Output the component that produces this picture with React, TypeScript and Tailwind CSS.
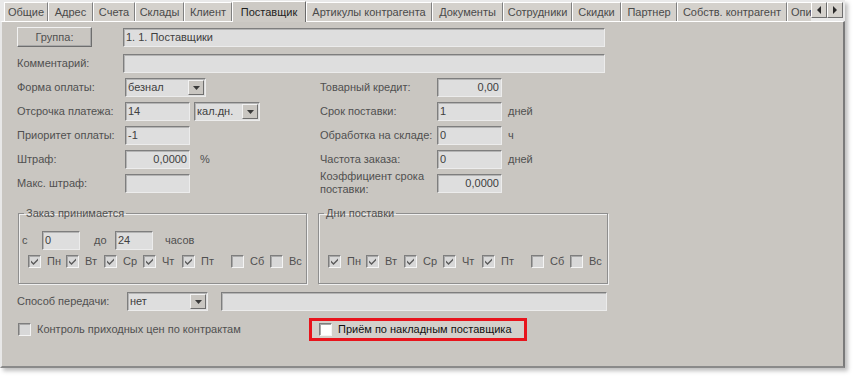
import React from "react";

const font = "font-['Liberation_Sans',Arial,sans-serif] text-[11px] leading-[13px]";

const tabs = [
  { label: "Общие", w: "w-[44px]" },
  { label: "Адрес", w: "w-[45px]" },
  { label: "Счета", w: "w-[42px]" },
  { label: "Склады", w: "w-[49px]" },
  { label: "Клиент", w: "w-[48px]" },
  { label: "Поставщик", w: "w-[74px]", active: true },
  { label: "Артикулы контрагента", w: "w-[126px]" },
  { label: "Документы", w: "w-[71px]" },
  { label: "Сотрудники", w: "w-[69px]" },
  { label: "Скидки", w: "w-[49px]" },
  { label: "Партнер", w: "w-[56px]" },
  { label: "Собств. контрагент", w: "w-[110px]" },
];

function Input({ w, value, right }: { w: string; value?: string; right?: boolean }) {
  return (
    <div
      className={`${w} h-[19px] shrink-0 bg-[#dedede] border border-t-[#7e7e7e] border-l-[#7e7e7e] border-b-[#ececec] border-r-[#ececec] shadow-[inset_1px_1px_0_#b4b4b4] px-[2px] flex items-center overflow-hidden whitespace-nowrap text-[#404040] ${right ? "justify-end" : ""}`}
    >
      {value}
    </div>
  );
}

function Combo({ w, value }: { w: string; value: string }) {
  return (
    <div
      className={`${w} h-[19px] shrink-0 bg-[#dedede] border border-t-[#7e7e7e] border-l-[#7e7e7e] border-b-[#ececec] border-r-[#ececec] shadow-[inset_1px_1px_0_#b4b4b4] pl-[2px] pr-[1px] flex items-center justify-between text-[#404040]`}
    >
      <span>{value}</span>
      <div className="w-[16px] h-[15px] bg-[#c9c6c1] border border-t-[#f2f2f2] border-l-[#f2f2f2] border-b-[#6e6e6e] border-r-[#6e6e6e] flex items-center justify-center">
        <svg width="7" height="4" viewBox="0 0 7 4">
          <path d="M0 0h7L3.5 4z" fill="#3a3a3a" />
        </svg>
      </div>
    </div>
  );
}

function Check({ checked, white }: { checked?: boolean; white?: boolean }) {
  return (
    <div
      className={`w-[13px] h-[13px] shrink-0 border border-t-[#7e7e7e] border-l-[#7e7e7e] border-b-[#f4f4f4] border-r-[#f4f4f4] shadow-[inset_1px_1px_0_#a8a8a8] flex items-center justify-center ${white ? "bg-white" : "bg-[#d8d8d8]"}`}
    >
      {checked && (
        <svg width="7" height="7" viewBox="0 0 7 7">
          <path d="M0 2.5l2.5 2.5L7 0.5v2L2.5 7 0 4.5z" fill="#5c5c5c" />
        </svg>
      )}
    </div>
  );
}

function Days({ checks }: { checks: boolean[] }) {
  const days = ["Пн", "Вт", "Ср", "Чт", "Пт", "Сб", "Вс"];
  const widths = ["w-[38px]", "w-[38px]", "w-[39px]", "w-[39px]", "w-[49px]", "w-[39px]", "w-[30px]"];
  return (
    <div className="flex h-[13px] items-center">
      {days.map((d, i) => (
        <div key={d} className={`${widths[i]} flex items-center gap-[6px]`}>
          <Check checked={checks[i]} />
          <span>{d}</span>
        </div>
      ))}
    </div>
  );
}

function Row({ label, lw, children }: { label: React.ReactNode; lw: string; children: React.ReactNode }) {
  return (
    <div className="flex items-center h-[19px]">
      <div className={`${lw} shrink-0`}>{label}</div>
      {children}
    </div>
  );
}

export default function App() {
  const week = [true, true, true, true, true, false, false];
  return (
    <div className={`w-[853px] h-[378px] bg-white overflow-hidden ${font} text-[#505050]`}>
      <div className="w-[845px] h-[368px] flex flex-col shadow-[3px_3px_4px_rgba(0,0,0,0.25)]">
        {/* tabs */}
        <div className="h-[21px] flex items-end pl-[4px] bg-[#e9e9e9] relative">
          {tabs.map((t) =>
            t.active ? (
              <div
                key={t.label}
                className={`${t.w} h-[21px] -mb-[1px] bg-[#cdcac5] border-t border-l border-t-white border-l-white border-r border-r-[#6a6a6a] flex items-center justify-center text-[#1e1e1e] z-10 whitespace-nowrap`}
              >
                {t.label}
              </div>
            ) : (
              <div
                key={t.label}
                className={`${t.w} h-[19px] bg-[#d4d1cc] border-t border-t-white border-l border-l-white border-r border-r-[#808080] flex items-center justify-center whitespace-nowrap overflow-hidden text-[#4a4a4a]`}
              >
                {t.label}
              </div>
            )
          )}
          <div className="w-[24px] h-[19px] bg-[#d4d1cc] border-t border-t-white border-l border-l-white whitespace-nowrap pl-[3px] flex items-center text-[#4a4a4a]">
            Опи
          </div>
          <div className="flex h-[19px] items-start">
            {["M5 0v8L1 4z", "M1 0v8l4-4z"].map((d, i) => (
              <div
                key={i}
                className="w-[16px] h-[16px] bg-[#d4d1cc] border border-t-white border-l-white border-b-[#6e6e6e] border-r-[#6e6e6e] flex items-center justify-center"
              >
                <svg width="6" height="8" viewBox="0 0 6 8">
                  <path d={d} fill="#2a2a2a" />
                </svg>
              </div>
            ))}
          </div>
        </div>

        {/* body */}
        <div className="flex-1 bg-[#c9c6c1] border-t border-t-white border-l-2 border-l-[#e8e8e8] border-r-2 border-r-[#7a7a7a] border-b-2 border-b-[#8a8a8a] pl-[15px] pt-[5px] flex flex-col">
          <div className="flex items-center h-[20px]">
            <div className="w-[75px] h-[20px] bg-[#c9c6c1] border border-t-[#f2f2f2] border-l-[#f2f2f2] border-b-[#6e6e6e] border-r-[#6e6e6e] shadow-[inset_-1px_-1px_0_#a8a8a8] flex items-center justify-center">
              Группа:
            </div>
            <div className="ml-[31px]">
              <Input w="w-[482px]" value="1. 1. Поставщики" />
            </div>
          </div>
          <div className="mt-[7px]">
            <Row label="Комментарий:" lw="w-[106px]">
              <Input w="w-[482px]" />
            </Row>
          </div>

          <div className="flex mt-[5px]">
            <div className="w-[303px] flex flex-col gap-[5px]">
              <Row label="Форма оплаты:" lw="w-[108px]">
                <Combo w="w-[81px]" value="безнал" />
              </Row>
              <Row label="Отсрочка платежа:" lw="w-[108px]">
                <Input w="w-[65px]" value="14" />
                <div className="ml-[4px]">
                  <Combo w="w-[66px]" value="кал.дн." />
                </div>
              </Row>
              <Row label="Приоритет оплаты:" lw="w-[108px]">
                <Input w="w-[65px]" value="-1" />
              </Row>
              <Row label="Штраф:" lw="w-[108px]">
                <Input w="w-[65px]" value="0,0000" right />
                <span className="ml-[10px]">%</span>
              </Row>
              <Row label="Макс. штраф:" lw="w-[108px]">
                <Input w="w-[65px]" />
              </Row>
            </div>
            <div className="flex flex-col gap-[5px]">
              <Row label="Товарный кредит:" lw="w-[117px]">
                <Input w="w-[65px]" value="0,00" right />
              </Row>
              <Row label="Срок поставки:" lw="w-[117px]">
                <Input w="w-[65px]" value="1" />
                <span className="ml-[6px]">дней</span>
              </Row>
              <Row label="Обработка на складе:" lw="w-[117px]">
                <Input w="w-[65px]" value="0" />
                <span className="ml-[6px]">ч</span>
              </Row>
              <Row label="Частота заказа:" lw="w-[117px]">
                <Input w="w-[65px]" value="0" />
                <span className="ml-[6px]">дней</span>
              </Row>
              <Row label={<div className="w-[108px] leading-[13px] -mt-[2px]">Коэффициент срока поставки:</div>} lw="w-[117px]">
                <Input w="w-[65px]" value="0,0000" right />
              </Row>
            </div>
          </div>

          <div className="flex mt-[14px] gap-[11px] pl-[1px]">
            <fieldset className="w-[289px] border border-[#8e8e8e] shadow-[inset_1px_1px_0_#f0f0f0,1px_1px_0_#f0f0f0] pb-[15px]">
              <legend className="ml-[5px] px-[2px] leading-[13px]">Заказ принимается</legend>
              <div className="flex items-center mt-[11px] pl-[3px] h-[19px]">
                <span className="w-[20px]">с</span>
                <Input w="w-[38px]" value="0" />
                <span className="ml-[14px] w-[21px]">до</span>
                <Input w="w-[38px]" value="24" />
                <span className="ml-[12px]">часов</span>
              </div>
              <div className="mt-[5px] pl-[9px]">
                <Days checks={week} />
              </div>
            </fieldset>
            <fieldset className="w-[290px] border border-[#8e8e8e] shadow-[inset_1px_1px_0_#f0f0f0,1px_1px_0_#f0f0f0] pb-[15px]">
              <legend className="ml-[5px] px-[2px] leading-[13px]">Дни поставки</legend>
              <div className="mt-[11px] h-[19px]" />
              <div className="mt-[5px] pl-[9px]">
                <Days checks={week} />
              </div>
            </fieldset>
          </div>

          <div className="flex items-center mt-[8px] h-[19px]">
            <div className="w-[110px]">Способ передачи:</div>
            <Combo w="w-[81px]" value="нет" />
            <div className="ml-[13px]">
              <Input w="w-[386px]" />
            </div>
          </div>

          <div className="flex items-center mt-[7px]">
            <div className="w-[292px] flex items-center gap-[6px] pl-[1px]">
              <Check />
              <span>Контроль приходных цен по контрактам</span>
            </div>
            <div className="w-[218px] h-[23px] border-[3px] border-[#e8141c] bg-[#d3d0cb] flex items-center pl-[7px] gap-[6px] text-[#111]">
              <Check white />
              <span>Приём по накладным поставщика</span>
            </div>
          </div>
        </div>
      </div>
    </div>
  );
}
